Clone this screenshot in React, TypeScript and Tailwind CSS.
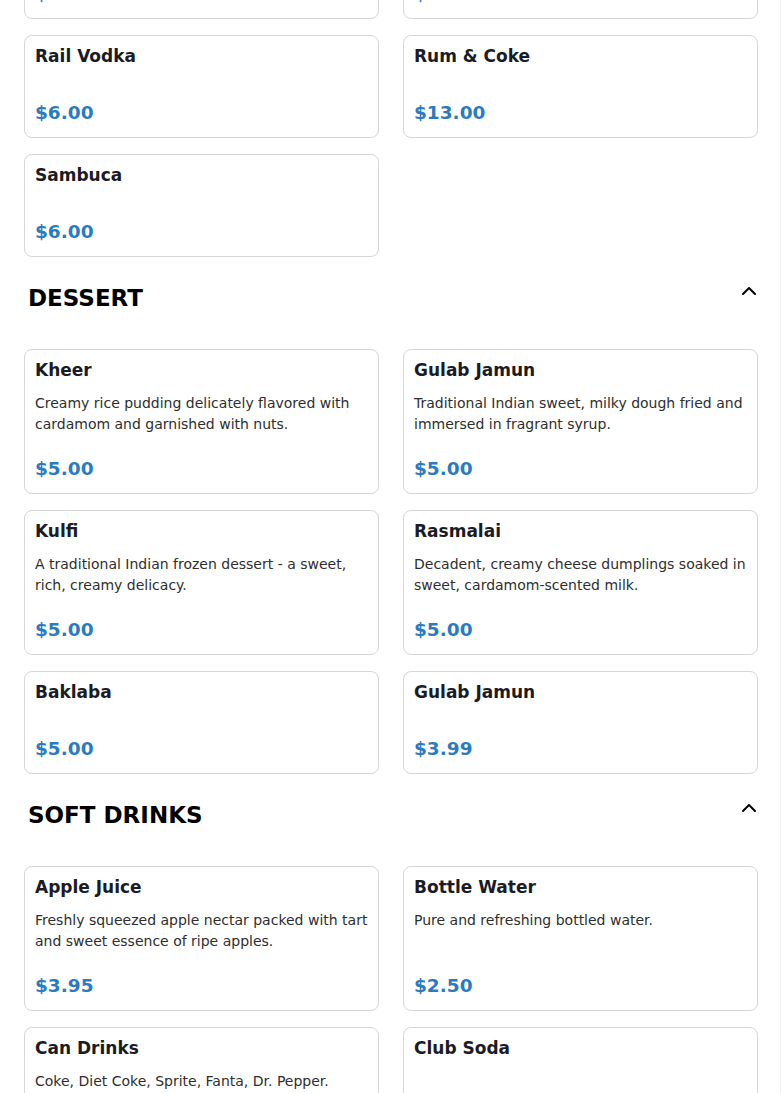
import React from "react";
import { ChevronUp } from "lucide-react";

type Item = { name: string; desc?: string; price: string };

const barTail: Item[] = [
  { name: "Rail Tequila", price: "$10.00" },
  { name: "Rail Whiskey", price: "$10.00" },
  { name: "Rail Vodka", price: "$6.00" },
  { name: "Rum & Coke", price: "$13.00" },
  { name: "Sambuca", price: "$6.00" },
];

const dessert: Item[] = [
  {
    name: "Kheer",
    desc: "Creamy rice pudding delicately flavored with cardamom and garnished with nuts.",
    price: "$5.00",
  },
  {
    name: "Gulab Jamun",
    desc: "Traditional Indian sweet, milky dough fried and immersed in fragrant syrup.",
    price: "$5.00",
  },
  {
    name: "Kulfi",
    desc: "A traditional Indian frozen dessert - a sweet, rich, creamy delicacy.",
    price: "$5.00",
  },
  {
    name: "Rasmalai",
    desc: "Decadent, creamy cheese dumplings soaked in sweet, cardamom-scented milk.",
    price: "$5.00",
  },
  { name: "Baklaba", price: "$5.00" },
  { name: "Gulab Jamun", price: "$3.99" },
];

const softDrinks: Item[] = [
  {
    name: "Apple Juice",
    desc: "Freshly squeezed apple nectar packed with tart and sweet essence of ripe apples.",
    price: "$3.95",
  },
  { name: "Bottle Water", desc: "Pure and refreshing bottled water.", price: "$2.50" },
  { name: "Can Drinks", desc: "Coke, Diet Coke, Sprite, Fanta, Dr. Pepper.", price: "$1.99" },
  { name: "Club Soda", price: "$2.50" },
];

function Card({ item }: { item: Item }) {
  return (
    <div className="flex flex-col rounded-lg border border-[#d6d6d6] bg-white p-2.5">
      <h3 className="mb-[13px] text-[17px] leading-5 font-bold text-[#1b1b25]">{item.name}</h3>
      {item.desc ? (
        <p className="text-[14px] leading-[21px] text-[#2e2e2e]">{item.desc}</p>
      ) : null}
      <div className="mt-auto pt-5 text-[18.5px] leading-7 font-bold text-[#2b7bc1]">{item.price}</div>
    </div>
  );
}

function Grid({ items }: { items: Item[] }) {
  return (
    <div className="grid grid-cols-[355px_355px] gap-x-6 gap-y-4">
      {items.map((it, i) => (
        <Card key={i} item={it} />
      ))}
    </div>
  );
}

function Header({ title }: { title: string }) {
  return (
    <div className="flex items-start justify-between pt-[25px] pb-[35px] pl-1">
      <h2 className="text-[23px] leading-8 font-bold text-black">{title}</h2>
      <ChevronUp size={24} strokeWidth={2} className="-mt-[3.5px] -mr-[3px] text-black" />
    </div>
  );
}

export default function App() {
  return (
    <div
      className="min-h-screen w-[781px] border-r border-[#f1f1f1] bg-white"
      style={{ fontFamily: '"DejaVu Sans", "Noto Sans", sans-serif' }}
    >
      <div className="-mt-[84px] w-[758px] pl-6">
        <Grid items={barTail} />
        <Header title="DESSERT" />
        <Grid items={dessert} />
        <Header title="SOFT DRINKS" />
        <Grid items={softDrinks} />
        <div className="h-10" />
      </div>
    </div>
  );
}
